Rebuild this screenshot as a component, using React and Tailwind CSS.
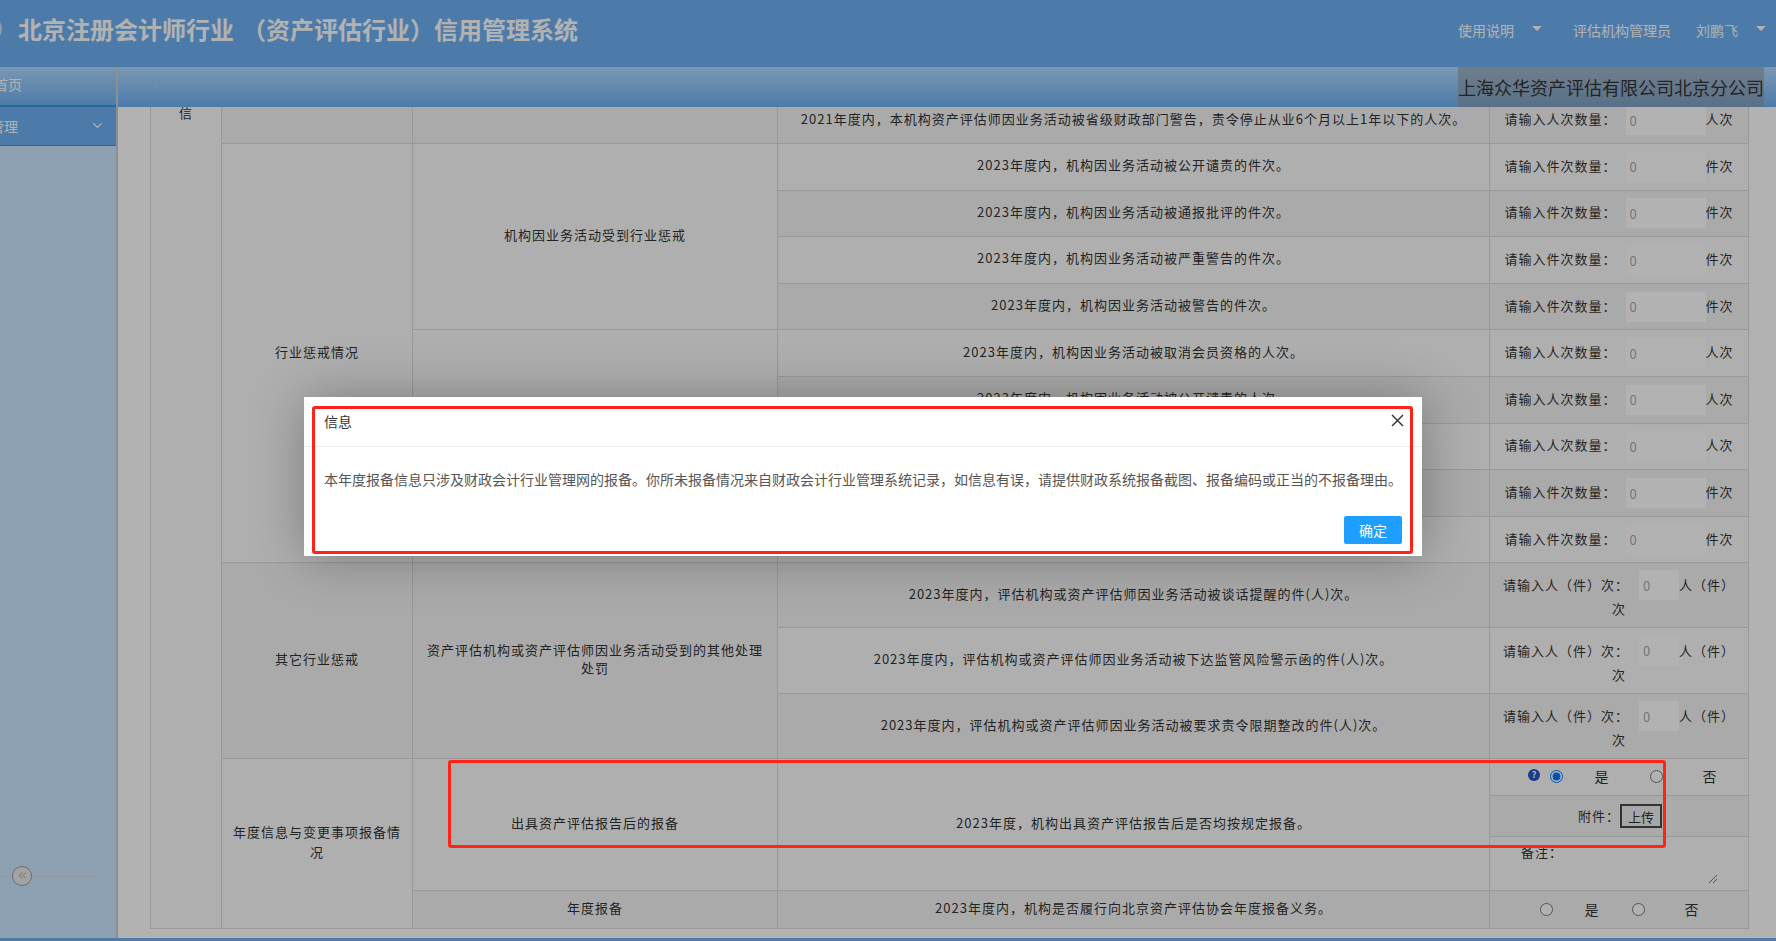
import React from "react";
import { ChevronDown, ChevronRight, ChevronsLeft } from "lucide-react";

const Tri = () => <span className="block w-0 h-0 border-x-[5px] border-x-transparent border-t-[5px] border-t-white" />;

const td = "border border-[#dcdcdc] px-[10px] pb-[4px] text-center align-middle";

const tr = (dark, h) => (dark ? "bg-[#f4f4f4] " : "bg-[#fbfbfb] ") + h;

function Count({ unit, kind }) {
  return (
    <td className={td}>
      <span>请输入{kind}数量：</span>
      <input readOnly value="0" className="w-20 h-[30px] ml-[9px] px-1 translate-y-[2px] bg-white text-[#aaa] tracking-[1px] outline-none" />
      <span>{unit}</span>
    </td>
  );
}

function Mixed() {
  return (
    <td className="border border-[#dcdcdc] px-[10px] pb-[2px] text-center align-middle leading-[20px]">
      请输入人（件）次：
      <input readOnly value="0" className="w-10 h-[30px] ml-[10px] px-1 translate-y-[1px] bg-white text-[#aaa] tracking-[1px] outline-none" />
      人（件）次
    </td>
  );
}

function Radio({ checked, className }) {
  return <input type="radio" readOnly checked={!!checked} className={"w-[13px] h-[13px] shrink-0 " + className} />;
}

const rowsTop = [
  ["2023年度内，机构因业务活动被公开谴责的件次。", "件次", "件次"],
  ["2023年度内，机构因业务活动被通报批评的件次。", "件次", "件次"],
  ["2023年度内，机构因业务活动被严重警告的件次。", "件次", "件次"],
  ["2023年度内，机构因业务活动被警告的件次。", "件次", "件次"],
  ["2023年度内，机构因业务活动被取消会员资格的人次。", "人次", "人次"],
  ["2023年度内，机构因业务活动被公开谴责的人次。", "人次", "人次"],
  ["2023年度内，机构因业务活动被通报批评的人次。", "人次", "人次"],
  ["2023年度内，机构因业务活动被严重警告的件次。", "件次", "件次"],
  ["2023年度内，机构因业务活动被警告的件次。", "件次", "件次"],
];

const rowsMixed = [
  "2023年度内，评估机构或资产评估师因业务活动被谈话提醒的件(人)次。",
  "2023年度内，评估机构或资产评估师因业务活动被下达监管风险警示函的件(人)次。",
  "2023年度内，评估机构或资产评估师因业务活动被要求责令限期整改的件(人)次。",
];
const mixedH = ["h-[65px]", "h-[66px]", "h-[65px]"];

export default function App() {
  return (
    <div className="relative h-screen w-full overflow-hidden flex flex-col bg-white font-['Noto_Sans_CJK_SC',sans-serif]">
      <header className="h-[67px] shrink-0 flex items-center bg-[#6eb1f4] text-white">
        <svg width="22" height="28" viewBox="0 0 22 28" className="-ml-[19px] mb-[10px] shrink-0" fill="none" stroke="white" strokeOpacity="0.6" strokeWidth="2">
          <circle cx="8" cy="14" r="12" />
        </svg>
        <h1 className="ml-[15px] mb-[10px] text-2xl font-bold leading-8 whitespace-nowrap">
          北京注册会计师行业<span className="ml-[8px]">（</span>资产评估行业）信用管理系统
        </h1>
        <nav className="ml-auto mr-[10px] mb-[7px] flex items-center text-sm">
          <span>使用说明</span>
          <span className="ml-[18px] mb-[3px]"><Tri /></span>
          <span className="ml-[31px]">评估机构管理员</span>
          <span className="ml-[25px]">刘鹏飞</span>
          <span className="ml-[18px] mb-[3px]"><Tri /></span>
        </nav>
      </header>

      <div className="flex-1 min-h-0 flex">
        <aside className="relative w-[118px] shrink-0 border-r-2 border-[#cccccc] bg-[#cae7ff] text-white text-sm overflow-hidden">
          <div className="h-[39.5px] flex items-center pb-[3px] bg-gradient-to-b from-[#b0d9ff] to-[#6eb1f4] border-b-2 border-[#3298dc]">
            <span className="-ml-[6px] whitespace-nowrap">首页</span>
          </div>
          <div className="h-[39px] flex items-center justify-between pr-[11px] bg-[#6eb1f4] border-b border-[#3298dc]">
            <span className="-ml-[38px] whitespace-nowrap">信用管理</span>
            <ChevronDown size={15} strokeWidth={2} />
          </div>
          <div className="absolute left-0 bottom-[61px] w-[100px] h-px bg-[#d0dbe3]" />
          <div className="absolute left-[12px] bottom-[52px] w-[20px] h-[20px] rounded-full border border-[#9a9a9a] bg-[#eaeaea] flex items-center justify-center text-[#8a8a8a]">
            <ChevronsLeft size={13} strokeWidth={1.5} />
          </div>
        </aside>

        <main className="flex-1 min-w-0 flex flex-col">
          <div className="h-[40px] shrink-0 flex items-center justify-between bg-gradient-to-b from-[#b0d9ff] to-[#6eb1f4]">
            <ChevronRight size={12} strokeWidth={1.5} className="ml-[32px] mb-[2px] text-white/20" />
            <div className="w-[306px] mr-[12px] h-full flex items-center bg-[#919191]/50 text-[#333] text-lg whitespace-nowrap">
              上海众华资产评估有限公司北京分公司
            </div>
          </div>

          <div className="flex-1 min-h-0 overflow-hidden pl-[32px]">
            <table className="-mt-[10.5px] w-[1598px] table-fixed border-collapse text-[13px] tracking-[1px] text-[#333]">
              <colgroup>
                <col className="w-[71px]" />
                <col className="w-[191px]" />
                <col className="w-[365px]" />
                <col className="w-[712px]" />
                <col className="w-[259px]" />
              </colgroup>
              <tbody>
                <tr className={tr(true, "h-[46.6px]")}>
                  <td rowSpan={15} className="border border-[#dcdcdc] text-center align-top pt-[5px] bg-[#fbfbfb]">信</td>
                  <td className={td}></td>
                  <td className={td}></td>
                  <td className={td}>2021年度内，本机构资产评估师因业务活动被省级财政部门警告，责令停止从业6个月以上1年以下的人次。</td>
                  <Count unit="人次" kind="人次" />
                </tr>
                {rowsTop.map((r, i) => (
                  <tr key={i} className={tr(i % 2 === 1, "h-[46.6px]")}>
                    {i === 0 && <td rowSpan={9} className={td}>行业惩戒情况</td>}
                    {i === 0 && <td rowSpan={4} className={td}>机构因业务活动受到行业惩戒</td>}
                    {i === 4 && <td rowSpan={5} className={td}>资产评估师因业务活动受到行业惩戒</td>}
                    <td className={td}>{r[0]}</td>
                    <Count unit={r[1]} kind={r[2]} />
                  </tr>
                ))}
                {rowsMixed.map((t, i) => (
                  <tr key={t} className={tr(i % 2 === 0, mixedH[i])}>
                    {i === 0 && <td rowSpan={3} className={td}>其它行业惩戒</td>}
                    {i === 0 && <td rowSpan={3} className={td + " leading-[18px]"}>资产评估机构或资产评估师因业务活动受到的其他处理处罚</td>}
                    <td className={td}>{t}</td>
                    <Mixed />
                  </tr>
                ))}
                <tr className={tr(false, "h-[132px]")}>
                  <td rowSpan={2} className={td + " leading-[20px]"}>年度信息与变更事项报备情况</td>
                  <td className={td}>出具资产评估报告后的报备</td>
                  <td className={td}>2023年度，机构出具资产评估报告后是否均按规定报备。</td>
                  <td className="border border-[#dcdcdc] p-0 align-top">
                    <div className="flex flex-col">
                      <div className="h-[36px] flex items-center">
                        <span className="ml-[38px] mb-[4px] w-[12px] h-[12px] rounded-full bg-[#2154c4] text-white text-[9px] font-bold leading-[12px] tracking-normal text-center">?</span>
                        <Radio checked className="ml-[9.5px] mb-[1px]" />
                        <span className="ml-[32px] mb-[2px] w-[14px] text-sm tracking-normal">是</span>
                        <Radio className="ml-[41px] mb-[1px]" />
                        <span className="ml-[40px] mb-[2px] w-[14px] text-sm tracking-normal">否</span>
                      </div>
                      <div className="h-[41px] flex items-center bg-[#f4f4f4] border-t border-[#dcdcdc]">
                        <span className="ml-[88px] mb-[2px] w-[42px]">附件：</span>
                        <button className="w-[42px] h-[24px] border-2 border-[#4a4a4a] bg-[#f0f0f0] text-[#333] text-[13px] tracking-normal">上传</button>
                      </div>
                      <div className="relative h-[54px] border-t border-[#dcdcdc]">
                        <span className="block ml-[31px] mt-[5px]">备注：</span>
                        <svg width="10" height="10" viewBox="0 0 10 10" className="absolute right-[30px] bottom-[6px] text-[#555]" stroke="currentColor" strokeWidth="0.8">
                          <line x1="1" y1="9" x2="9" y2="1" />
                          <line x1="5" y1="9" x2="9" y2="5" />
                        </svg>
                      </div>
                    </div>
                  </td>
                </tr>
                <tr className={tr(true, "h-[37.5px]")}>
                  <td className={td}>年度报备</td>
                  <td className={td}>2023年度内，机构是否履行向北京资产评估协会年度报备义务。</td>
                  <td className="border border-[#dcdcdc] p-0">
                    <div className="flex items-center">
                      <Radio className="ml-[49.5px]" />
                      <span className="ml-[32px] mb-[2px] w-[14px] text-sm tracking-normal">是</span>
                      <Radio className="ml-[33px]" />
                      <span className="ml-[40px] mb-[2px] w-[14px] text-sm tracking-normal">否</span>
                    </div>
                  </td>
                </tr>
              </tbody>
            </table>
          </div>
        </main>
      </div>
      <div className="h-[3.5px] shrink-0 bg-[#6eb1f4]" />

      <div className="absolute inset-0 bg-black/30" />

      <section className="absolute left-[304px] top-[397px] w-[1118px] h-[159px] bg-white shadow-[1px_1px_50px_rgba(0,0,0,0.3)] flex flex-col text-sm text-[#555]">
        <div className="h-[50px] shrink-0 flex items-center justify-between pl-[20px] pr-[18px] pb-[2px] border-b border-[#eeeeee] text-[#333]">
          <span>信息</span>
          <svg width="13" height="13" viewBox="0 0 13 13" stroke="#333" strokeWidth="1.4">
            <line x1="1" y1="1" x2="12" y2="12" />
            <line x1="12" y1="1" x2="1" y2="12" />
          </svg>
        </div>
        <p className="pl-[20px] pt-[20px] leading-[24px] whitespace-nowrap">
          本年度报备信息只涉及财政会计行业管理网的报备。你所未报备情况来自财政会计行业管理系统记录，如信息有误，请提供财政系统报备截图、报备编码或正当的不报备理由。
        </p>
        <div className="mt-auto pr-[20px] pb-[12px] flex justify-end">
          <button className="w-[58px] h-[28px] rounded-[2px] bg-[#1e9fff] text-white text-sm">确定</button>
        </div>
      </section>

      <div className="absolute left-[312px] top-[406px] w-[1101px] h-[148px] border-[3px] border-[#ff2318] rounded-[3px]" />
      <div className="absolute left-[448px] top-[760px] w-[1218px] h-[88px] border-[3px] border-[#ff2318] rounded-[3px]" />
    </div>
  );
}
